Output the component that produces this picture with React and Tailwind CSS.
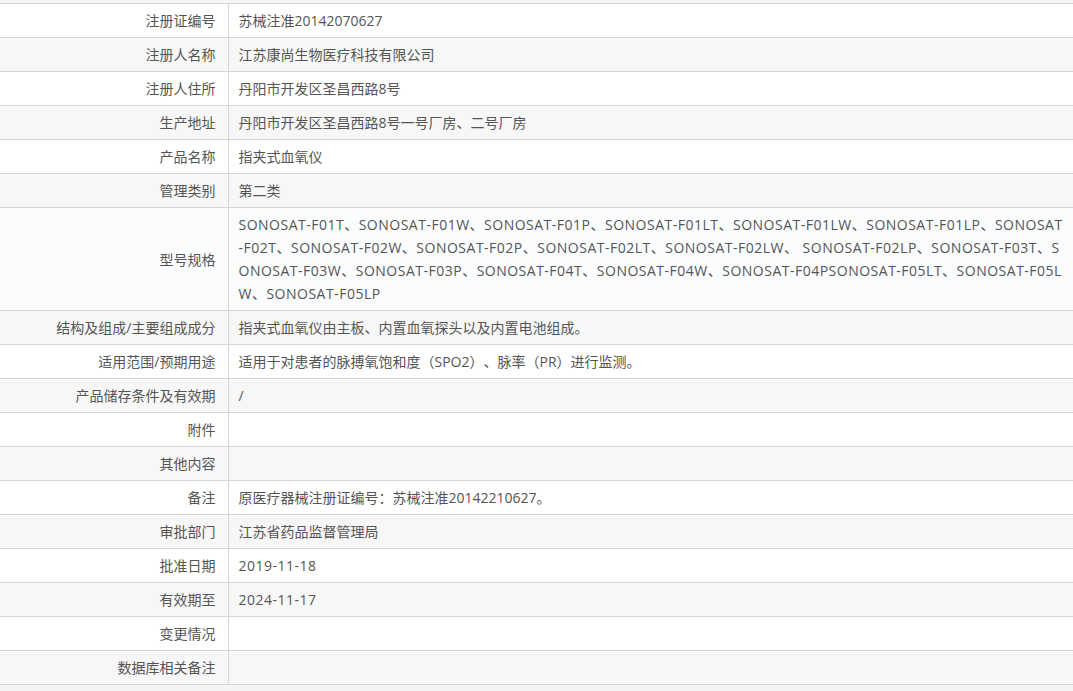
import React from "react";

const rows = [
  ["注册证编号", "苏械注准20142070627"],
  ["注册人名称", "江苏康尚生物医疗科技有限公司"],
  ["注册人住所", "丹阳市开发区圣昌西路8号"],
  ["生产地址", "丹阳市开发区圣昌西路8号一号厂房、二号厂房"],
  ["产品名称", "指夹式血氧仪"],
  ["管理类别", "第二类"],
  [
    "型号规格",
    "SONOSAT-F01T、SONOSAT-F01W、SONOSAT-F01P、SONOSAT-F01LT、SONOSAT-F01LW、SONOSAT-F01LP、SONOSAT-F02T、SONOSAT-F02W、SONOSAT-F02P、SONOSAT-F02LT、SONOSAT-F02LW、 SONOSAT-F02LP、SONOSAT-F03T、SONOSAT-F03W、SONOSAT-F03P、SONOSAT-F04T、SONOSAT-F04W、SONOSAT-F04PSONOSAT-F05LT、SONOSAT-F05LW、SONOSAT-F05LP",
  ],
  ["结构及组成/主要组成成分", "指夹式血氧仪由主板、内置血氧探头以及内置电池组成。"],
  ["适用范围/预期用途", "适用于对患者的脉搏氧饱和度（SPO2）、脉率（PR）进行监测。"],
  ["产品储存条件及有效期", "/"],
  ["附件", ""],
  ["其他内容", ""],
  ["备注", "原医疗器械注册证编号：苏械注准20142210627。"],
  ["审批部门", "江苏省药品监督管理局"],
  ["批准日期", "2019-11-18"],
  ["有效期至", "2024-11-17"],
  ["变更情况", ""],
  ["数据库相关备注", ""],
];

const latinRows = ["型号规格", "批准日期", "有效期至"];

const App = () => {
  return (
    <div
      className="w-full min-h-[691px] bg-[#f4f4f4] pt-[3px] text-[14px] leading-[23px] text-[#555] [text-spacing-trim:space-all]"
      style={{ fontFamily: '"Open Sans", "Noto Sans CJK SC", sans-serif' }}
    >
      <table className="w-full border-collapse table-fixed">
        <colgroup>
          <col className="w-[228px]" />
          <col />
        </colgroup>
        <tbody>
          {rows.map(([label, value], i) => (
            <tr
              key={label}
              className={`border-y border-[#d6d6d6] ${
                i === 6 ? "bg-[#fbfcfe]" : i % 2 === 1 ? "bg-[#f7f7f7]" : "bg-white"
              }`}
            >
              <td className="border-r border-[#d6d6d6] pr-[12px] py-[5px] text-right align-middle">
                {label}
              </td>
              <td
                className={`pl-[10px] pr-[8px] py-[5px] break-all align-middle ${
                  latinRows.includes(label) ? "tracking-[0.5px]" : ""
                }`}
              >
                {value}
              </td>
            </tr>
          ))}
        </tbody>
      </table>
    </div>
  );
};

export default App;
